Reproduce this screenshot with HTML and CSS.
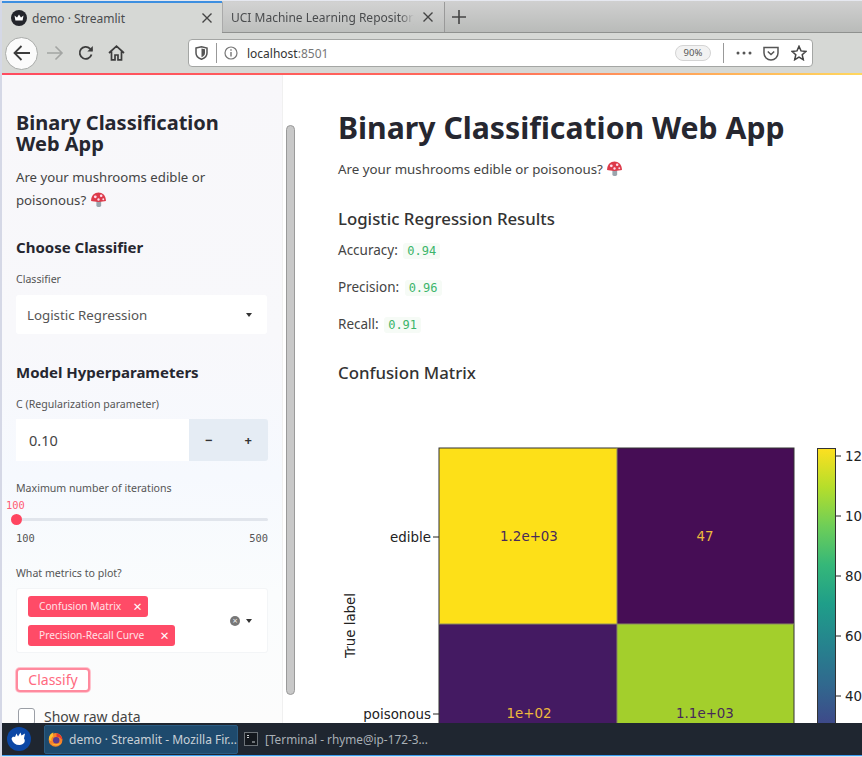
FILE: index.html
```html
<!DOCTYPE html>
<html lang="en">
<head>
<meta charset="utf-8">
<title>demo · Streamlit</title>
<link rel="stylesheet" href="styles.css">
</head>
<body>
<div class="screen">
  <div class="tabbar">
    <div class="tab tab-active">
      <svg class="favicon" width="18" height="18" viewBox="0 0 18 18"><circle cx="9" cy="9" r="8" fill="#23252b"/><path d="M4.500 6.500 7 8.500 9 5.500 11 8.500 13.500 6.500 12.600 11.500H5.400Z" fill="#fff"/></svg>
      <span class="tab-title">demo · Streamlit</span>
      <svg class="tab-x" width="12" height="12" viewBox="0 0 12 12"><path d="M1.500 1.500 10.500 10.500M10.500 1.500 1.500 10.500" stroke="#444" stroke-width="1.400"/></svg>
    </div>
    <div class="tab tab-idle">
      <span class="tab-title tab-fade">UCI Machine Learning Repository</span>
      <svg class="tab-x" width="12" height="12" viewBox="0 0 12 12"><path d="M1.500 1.500 10.500 10.500M10.500 1.500 1.500 10.500" stroke="#444" stroke-width="1.400"/></svg>
    </div>
    <svg class="newtab" width="16" height="16" viewBox="0 0 16 16"><path d="M8 1V15M1 8H15" stroke="#444" stroke-width="1.600"/></svg>
  </div>

  <div class="toolbar">
    <div class="back">
      <svg width="20" height="18" viewBox="0 0 20 18"><path d="M18 9H3M9.500 2 2.500 9l7 7" fill="none" stroke="#3c3c3c" stroke-width="1.800"/></svg>
    </div>
    <svg class="nav-fwd" width="18" height="16" viewBox="0 0 18 16"><path d="M1 8H16M9.500 1.500 16 8l-6.500 6.500" fill="none" stroke="#a3a5a3" stroke-width="1.600"/></svg>
    <svg class="nav-reload" width="16" height="16" viewBox="0 0 16 16"><path d="M13.500 9.500A6 6 0 1 1 12 3.600L14 5.500" fill="none" stroke="#3c3c3c" stroke-width="1.800"/><path d="M14.800 1V6.500H9.300Z" fill="#3c3c3c"/></svg>
    <svg class="nav-home" width="17" height="16" viewBox="0 0 17 16"><path d="M1 8 8.500 1.200 16 8M3.500 6.500V14.800H7V10H10V14.800H13.500V6.500" fill="none" stroke="#3c3c3c" stroke-width="1.700"/></svg>
    <div class="urlbar">
      <svg class="shield" width="13" height="14" viewBox="0 0 13 14"><path d="M1 2 6.500 .8 12 2V7C12 10 9.500 12.300 6.500 13.300 3.500 12.300 1 10 1 7Z" fill="none" stroke="#555" stroke-width="1.500"/><path d="M6.500 2.500 10 3.300V7C10 9 8.500 10.500 6.500 11.300Z" fill="#555"/></svg>
      <span class="url-sep"></span>
      <svg class="info" width="14" height="14" viewBox="0 0 14 14"><circle cx="7" cy="7" r="6" fill="none" stroke="#777" stroke-width="1.200"/><path d="M7 6V10.500M7 3.300V4.800" stroke="#777" stroke-width="1.400"/></svg>
      <span class="url-text">localhost<span class="url-port">:8501</span></span>
      <span class="zoom-pill">90%</span>
      <span class="url-sep url-sep-right"></span>
      <svg class="dots" width="16" height="4" viewBox="0 0 16 4"><circle cx="2" cy="2" r="1.500" fill="#555"/><circle cx="8" cy="2" r="1.500" fill="#555"/><circle cx="14" cy="2" r="1.500" fill="#555"/></svg>
      <svg class="pocket" width="16" height="15" viewBox="0 0 16 15"><path d="M1 1.500H15V7A7 7 0 0 1 1 7Z" fill="none" stroke="#555" stroke-width="1.500"/><path d="M4.800 5.500 8 8.500 11.200 5.500" fill="none" stroke="#555" stroke-width="1.500"/></svg>
      <svg class="star" width="16" height="16" viewBox="0 0 16 16"><path d="M8 1.300 10 5.900 15 6.400 11.200 9.700 12.300 14.700 8 12.100 3.700 14.700 4.800 9.700 1 6.400 6 5.900Z" fill="none" stroke="#444" stroke-width="1.500"/></svg>
    </div>
  </div>
  <div class="loadline"></div>

  <div class="app">
    <aside class="sidebar">
      <h2 class="side-title">Binary Classification Web App</h2>
      <p class="side-text">Are your mushrooms edible or poisonous? <svg class="mush" viewBox="0 0 16 16"><rect x="6" y="8" width="4.500" height="7" rx="1.500" fill="#9aa5ad"/><path d="M1 9.500C1 4 4.500 1.500 8 1.500S15 4 15 9.500C12 10.500 4 10.500 1 9.500Z" fill="#dd3a4a"/><circle cx="5" cy="5.500" r="1.300" fill="#fde"/><circle cx="10.500" cy="4.500" r="1.200" fill="#fde"/><circle cx="8" cy="8" r="1.100" fill="#fde"/><circle cx="12.500" cy="7.800" r=".9" fill="#fde"/></svg></p>

      <h3 class="side-head head-classifier">Choose Classifier</h3>
      <div class="field-label label-classifier">Classifier</div>
      <div class="select">
        <span>Logistic Regression</span>
        <span class="caret"></span>
      </div>

      <h3 class="side-head head-model">Model Hyperparameters</h3>
      <div class="field-label label-c">C (Regularization parameter)</div>
      <div class="number">
        <div class="number-value">0.10</div>
        <div class="number-btns"><b>−</b><b>+</b></div>
      </div>

      <div class="field-label label-iter">Maximum number of iterations</div>
      <div class="slider">
        <span class="slider-value">100</span>
        <span class="slider-track"></span>
        <span class="slider-thumb"></span>
      </div>
      <div class="slider-range"><span>100</span><span>500</span></div>

      <div class="field-label label-metrics">What metrics to plot?</div>
      <div class="multi">
        <div class="tags">
          <span class="tag">Confusion Matrix<i>×</i></span>
          <span class="tag tag-wide">Precision-Recall Curve<i>×</i></span>
        </div>
        <span class="clear">×</span>
        <span class="caret"></span>
      </div>

      <button class="classify">Classify</button>
      <label class="check"><span class="box"></span>Show raw data</label>
    </aside>

    <span class="side-scroll"></span>

    <main class="main">
      <h1 class="title">Binary Classification Web App</h1>
      <p class="sub">Are your mushrooms edible or poisonous? <svg class="mush" viewBox="0 0 16 16"><rect x="6" y="8" width="4.500" height="7" rx="1.500" fill="#9aa5ad"/><path d="M1 9.500C1 4 4.500 1.500 8 1.500S15 4 15 9.500C12 10.500 4 10.500 1 9.500Z" fill="#dd3a4a"/><circle cx="5" cy="5.500" r="1.300" fill="#fde"/><circle cx="10.500" cy="4.500" r="1.200" fill="#fde"/><circle cx="8" cy="8" r="1.100" fill="#fde"/><circle cx="12.500" cy="7.800" r=".9" fill="#fde"/></svg></p>
      <h3 class="section sec-results">Logistic Regression Results</h3>
      <p class="metric">Accuracy: <code>0.94</code></p>
      <p class="metric">Precision: <code>0.96</code></p>
      <p class="metric">Recall: <code>0.91</code></p>
      <h3 class="section sec-matrix">Confusion Matrix</h3>

      <svg class="plot" width="560" height="330" viewBox="0 0 560 330">
        <defs>
          <linearGradient id="viridis" x1="0" y1="1" x2="0" y2="0">
            <stop offset="0" stop-color="#440154"/><stop offset=".11" stop-color="#482878"/>
            <stop offset=".22" stop-color="#3e4989"/><stop offset=".33" stop-color="#31688e"/>
            <stop offset=".44" stop-color="#26828e"/><stop offset=".56" stop-color="#1f9e89"/>
            <stop offset=".67" stop-color="#35b779"/><stop offset=".78" stop-color="#6ece58"/>
            <stop offset=".89" stop-color="#b5de2b"/><stop offset="1" stop-color="#fde020"/>
          </linearGradient>
        </defs>
        <rect x="101" y="48" width="178" height="176" fill="#fde018"/>
        <rect x="279" y="48" width="177" height="176" fill="#460d55"/>
        <rect x="101" y="224" width="178" height="177" fill="#441a62"/>
        <rect x="279" y="224" width="177" height="177" fill="#a3cf2c"/>
        <rect x="101" y="48" width="355" height="353" fill="none" stroke="#333" stroke-width="1"/>
        <path d="M279 48V401M101 224H456" stroke="#8a8a60" stroke-width="1"/>
        <path d="M95 137H101M95 314H101" stroke="#222" stroke-width="1"/>
        <g class="plot-text">
          <text x="93" y="142" text-anchor="end">edible</text>
          <text x="93" y="319" text-anchor="end">poisonous</text>
          <text transform="translate(17 258) rotate(-90)">True label</text>
          <text class="cell-dark" x="191" y="141" text-anchor="middle">1.2e+03</text>
          <text class="cell-light" x="367" y="141" text-anchor="middle">47</text>
          <text class="cell-light" x="191" y="318" text-anchor="middle">1e+02</text>
          <text class="cell-dark" x="367" y="318" text-anchor="middle">1.1e+03</text>
        </g>
        <rect x="479.500" y="48.500" width="18" height="353" fill="url(#viridis)" stroke="#333"/>
        <path d="M498 56H503M498 116H503M498 176H503M498 236H503M498 296H503" stroke="#222"/>
        <g class="plot-text">
          <text x="507" y="61">1200</text>
          <text x="507" y="121">1000</text>
          <text x="507" y="181">800</text>
          <text x="507" y="241">600</text>
          <text x="507" y="301">400</text>
        </g>
      </svg>
    </main>
  </div>

  <div class="taskbar">
    <svg class="start" width="24" height="24" viewBox="0 0 24 24"><circle cx="12" cy="12" r="12" fill="#0b47a5"/><path d="M4.500 12C5 9.500 6.500 9.500 8 10L9.500 6.500 11 9.500 13.500 5.500 14.500 8.500 18 6.500 17 11.500C19 14 17 18 12.500 18 8.500 18 6 16 4.500 12Z" fill="#fff"/></svg>
    <div class="task task-active">
      <svg class="fox" width="17" height="17" viewBox="0 0 16 16"><circle cx="8" cy="8.500" r="7.300" fill="#f5822a"/><circle cx="8.700" cy="8.800" r="3.400" fill="#5b3a8e"/><path d="M.9 7.500C1 3.500 3.500 1 5.800 .6 4.800 2 5 3.500 6 4.500 4 5 3 7 3.700 9.500 2 9.500 1.200 8.500.9 7.500Z" fill="#ffc02e"/><path d="M9 1.500C13 2.500 15.300 6 15.300 8.500 13.500 6 11.500 4.800 9 5Z" fill="#e8352f"/><path d="M3.500 12C6 15 11 15.500 14 11.500 12 13 6.500 13.500 3.500 12Z" fill="#ffb52e"/></svg>
      <span>demo · Streamlit - Mozilla Fir...</span>
    </div>
    <div class="task task-term">
      <svg width="14" height="14" viewBox="0 0 14 14"><rect x=".5" y=".5" width="13" height="13" fill="#14181e" stroke="#6c7278"/><path d="M3 3.500H5M3 5.500H5M8 10H11" stroke="#c8ccd0"/></svg>
      <span>[Terminal - rhyme@ip-172-3...</span>
    </div>
  </div>
  <div class="screen-foot"></div>
</div>
</body>
</html>
```
FILE: styles.css
```css
* { box-sizing: border-box; }
html, body { margin: 0; padding: 0; }
body { font-family: "Noto Sans", "Liberation Sans", sans-serif; color: #262730; }

.screen {
  width: 862px; height: 757px; overflow: hidden;
  display: flex; flex-direction: column;
  background: #fff; border-left: 2px solid #d5d8e6; border-top: 1px solid #e6e8f0;
  position: relative;
}

/* browser chrome */
.tabbar {
  height: 32px; flex: none; display: flex; align-items: stretch;
  background: linear-gradient(#d0d0d0, #b9bbb9);
  border-bottom: 1px solid #8f918f;
}
.tab { display: flex; align-items: center; font-size: 12px; color: #4a4c4e; }
.tab-active {
  width: 220px; height: 32px; padding: 0 9px 0 8px; gap: 4px;
  background: #d6d8d5; border-top: 2px solid #3d8fe0; position: relative; z-index: 1;
}
.tab-idle {
  width: 223px; padding: 0 10px 0 8px; margin-top: 1px; gap: 8px;
  background: linear-gradient(#d2d2d2, #bdbfbd); border-right: 1px solid #999; border-left: 1px solid #aaa;
}
.tab-title { flex: 1; white-space: nowrap; overflow: hidden; }
.tab-fade { -webkit-mask-image: linear-gradient(90deg, #000 92%, transparent); mask-image: linear-gradient(90deg, #000 92%, transparent); }
.tab-x { flex: none; }
.newtab { align-self: center; margin-left: 6px; }

.toolbar {
  height: 40px; flex: none; display: flex; align-items: center;
  background: #d6d8d5; padding-left: 3px;
}
.back {
  width: 33px; height: 33px; border-radius: 50%; flex: none;
  background: #fbfbfb; border: 1px solid #a9aba9;
  display: flex; align-items: center; justify-content: center;
}
.nav-fwd { margin-left: 8px; flex: none; }
.nav-reload { margin-left: 14px; flex: none; }
.nav-home { margin-left: 14px; flex: none; }
.urlbar {
  margin-left: 63px; width: 625px; height: 28px; flex: none;
  background: #fff; border: 1px solid #a4a6a4; border-radius: 4px;
  display: flex; align-items: center; padding-left: 6px;
  font-size: 12px; color: #333;
}
.url-sep { width: 1px; height: 20px; background: #999; margin-left: 8px; flex: none; }
.info { margin-left: 7px; flex: none; }
.url-text { margin-left: 9px; flex: 1; }
.url-port { color: #777; }
.zoom-pill {
  width: 36px; height: 16px; border: 1px solid #d4d4d4; border-radius: 8px; background: #f2f2f2;
  font-size: 9.5px; color: #555; text-align: center; line-height: 14px; flex: none;
}
.url-sep-right { margin-left: 12px; }
.dots { margin-left: 12px; flex: none; }
.pocket { margin-left: 11px; flex: none; }
.star { margin-left: 12px; margin-right: 5px; flex: none; }
.loadline { height: 2px; flex: none; background: linear-gradient(90deg, #ff4b5f, #ff6a5a 55%, #ffb35a 85%, #ffd75e); }

/* app */
.app { flex: 1; min-height: 0; display: flex; position: relative; overflow: hidden; }
.sidebar {
  width: 281px; flex: none; padding: 37px 0 0 14px; overflow: hidden;
  background: linear-gradient(#f8f7fa, #f8f8fb 40%, #f6f9fe 62%, #fafcfd 80%, #fcfcfc);
  border-right: 1px solid #f0f0f0;
  box-shadow: 1px 0 3px rgba(0,0,0,.05);
}
.side-title { margin: 0; font-size: 20px; line-height: 21px; font-weight: 700; color: #262730; width: 230px; }
.side-text { margin: 12px 0 0; font-size: 13.2px; line-height: 23px; color: #444; width: 225px; }
.mush { width: 17px; height: 17px; vertical-align: -3px; }
.side-head { margin: 0; font-size: 15px; line-height: 20px; font-weight: 700; color: #262730; }
.head-classifier { margin-top: 25px; }
.field-label { font-size: 10.6px; line-height: 14px; color: #555; }
.label-classifier { margin-top: 15px; }
.select {
  width: 251px; height: 39px; margin-top: 9px; background: #fff; border-radius: 3px;
  display: flex; align-items: center; justify-content: space-between;
  padding: 0 15px 0 11px; font-size: 13.3px; color: #555;
}
.caret { width: 0; height: 0; border: 3.5px solid transparent; border-top: 4px solid #333; border-bottom: 0; flex: none; }
.head-model { margin-top: 28px; }
.label-c { margin-top: 15px; }
.number { width: 252px; height: 42px; margin-top: 8px; display: flex; }
.number-value { width: 173px; background: #fff; padding-left: 13px; font-size: 14.5px; line-height: 42px; color: #444; }
.number-btns {
  flex: 1; background: #e5ecf4; border-radius: 0 3px 3px 0;
  display: flex; align-items: center; justify-content: space-around;
  font-size: 13px; color: #333;
}
.label-iter { margin-top: 20px; }
.slider { position: relative; height: 33px; width: 252px; margin-top: 4px; }
.slider-value { position: absolute; left: -10px; top: 0; font: 10.4px/13px "DejaVu Sans Mono", monospace; color: #ff5c74; }
.slider-track { position: absolute; left: 0; right: 0; top: 19px; height: 3px; background: #e1e5ec; border-radius: 2px; }
.slider-thumb { position: absolute; left: -5px; top: 15px; width: 11px; height: 11px; border-radius: 50%; background: #ff4560; }
.slider-range {
  width: 252px; display: flex; justify-content: space-between;
  font: 10.4px/13px "DejaVu Sans Mono", monospace; color: #555;
}
.label-metrics { margin-top: 21px; }
.multi {
  width: 252px; height: 65px; margin-top: 8px; background: #fff; border: 1px solid #f3f5f7; border-radius: 3px;
  display: flex; align-items: center; padding: 0 15px 0 11px;
}
.tags { flex: 1; display: flex; flex-direction: column; align-items: flex-start; gap: 8px; }
.tag {
  height: 21px; background: #ff4b67; color: #ffe2e6; border-radius: 3px;
  font-size: 10.2px; line-height: 21px; padding: 0 6px 0 11px; display: flex; gap: 12px; white-space: nowrap;
}
.tag-wide { gap: 16px; }
.tag i { font-style: normal; font-size: 15px; color: #fff; line-height: 20px; }
.clear {
  width: 10px; height: 10px; border-radius: 50%; background: #777; color: #eee;
  font-size: 9px; line-height: 9px; text-align: center; margin-right: 6px; flex: none;
}
.classify {
  display: block; width: 74px; height: 24px; margin-top: 15px; padding: 0; background: #fff;
  border: 2px solid #ff8a9e; border-radius: 4px; box-shadow: 0 0 0 1px #ffc4ce;
  font: 14px/18px "Noto Sans", sans-serif; color: #ff6a80;
}
.check { display: flex; align-items: center; margin: 15px 0 0 2px; font-size: 14px; color: #444; height: 18px; }
.box { width: 17px; height: 17px; border: 1px solid #9b9fa6; border-radius: 3px; background: #fff; margin-right: 9px; }

.side-scroll {
  position: absolute; left: 284px; top: 50px; width: 9px; height: 570px;
  background: #c8c8c8; border: 1px solid #9a9a9a; border-radius: 5px;
}

.main { flex: 1; min-width: 0; padding: 31px 0 0 55px; overflow: hidden; background: #fff; }
.title { margin: 0; font-size: 30.2px; line-height: 44px; font-weight: 700; color: #262730; white-space: nowrap; }
.sub { margin: 8px 0 0; font-size: 13.3px; line-height: 23px; color: #444; }
.section { margin: 0; font-size: 16.8px; line-height: 24px; font-weight: 500; color: #333; }
.sec-results { margin-top: 26px; }
.metric { margin: 0; font-size: 13.5px; line-height: 23px; height: 37px; color: #444; }
.sec-results + .metric { margin-top: 8px; }
.metric code {
  font: 12px/20px "DejaVu Sans Mono", monospace; color: #3bb56a; background: #f6fbf6;
  padding: 1px 4px; border-radius: 3px; margin-left: 2px;
}
.sec-matrix { margin-top: 11px; }
.plot { display: block; margin-top: 15px; }
.plot-text text { font: 13.4px "DejaVu Sans", sans-serif; fill: #222; }
.plot-text .cell-dark { fill: #47295a; }
.plot-text .cell-light { fill: #eeb93c; }

/* desktop panel */
.taskbar {
  height: 32px; flex: none; background: #1f2630; display: flex; align-items: center;
  padding-left: 5px; font-size: 12px; color: #c9d0d6; position: relative;
}
.task { display: flex; align-items: center; white-space: nowrap; overflow: hidden; }
.task-active {
  width: 194px; height: 29px; margin-left: 13px; padding-left: 3px; gap: 6px;
  background: #1e4a6d; border: 1px solid #2b5c82; border-radius: 2px;
}
.task-term { margin-left: 6px; gap: 7px; font-size: 11.8px; color: #a9b0b6; }
.screen-foot { height: 2px; flex: none; background: linear-gradient(#3b9cf0 50%, #dfe3ea 50%); }
```
